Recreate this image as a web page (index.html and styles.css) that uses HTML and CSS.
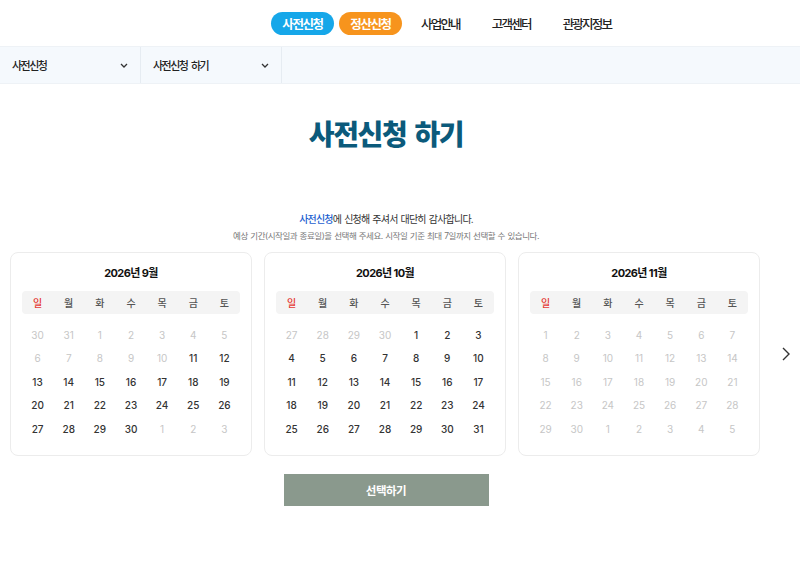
FILE: index.html
```html
<!DOCTYPE html>
<html lang="ko">
<head>
<meta charset="utf-8">
<title>사전신청 하기</title>
<link rel="stylesheet" href="styles.css">
</head>
<body>
<header class="top">
  <nav class="gnb">
    <a class="pill pill-blue">사전신청</a>
    <a class="pill pill-orange">정산신청</a>
    <a class="menu">사업안내</a>
    <a class="menu">고객센터</a>
    <a class="menu">관광지정보</a>
  </nav>
</header>
<div class="subnav">
  <div class="sub-item"><span>사전신청</span><svg class="chev" width="8" height="5" viewBox="0 0 8 5"><path d="M1 1 L4 4 L7 1" fill="none" stroke="#333" stroke-width="1.3"/></svg></div>
  <div class="sub-item"><span>사전신청 하기</span><svg class="chev" width="8" height="5" viewBox="0 0 8 5"><path d="M1 1 L4 4 L7 1" fill="none" stroke="#333" stroke-width="1.3"/></svg></div>
</div>
<main class="content">
  <h1 class="title">사전신청 하기</h1>
  <p class="lead"><span class="hl">사전신청</span>에 신청해 주셔서 대단히 감사합니다.</p>
  <p class="note">예상 기간(시작일과 종료일)을 선택해 주세요. 시작일 기준 최대 7일까지 선택할 수 있습니다.</p>
  <div class="carousel">
    <div class="cards" id="cards"></div>
    <div class="next"><svg width="10" height="16" viewBox="0 0 10 16"><path d="M2 2 L8 8 L2 14" fill="none" stroke="#333" stroke-width="1.4"/></svg></div>
  </div>
  <div class="actions"><button class="btn">선택하기</button></div>
</main>
<script src="app.js"></script>
</body>
</html>
```
FILE: app.js
```js
const months = [
  { title: "2026년 9월", start: 30, days: 30, leadCount: 2, active: d => d >= 11 },
  { title: "2026년 10월", start: 27, days: 31, leadCount: 4, active: d => true },
  { title: "2026년 11월", start: 0, days: 30, leadCount: 0, active: d => false }
];
const wk = ["일","월","화","수","목","금","토"];
const wrap = document.getElementById("cards");
months.forEach(m => {
  const card = document.createElement("div");
  card.className = "card";
  let html = '<div class="cal-title">' + m.title + '</div><div class="week">';
  wk.forEach((w, i) => { html += '<span class="' + (i === 0 ? 'sun' : '') + '">' + w + '</span>'; });
  html += '</div><div class="days">';
  const cells = [];
  for (let i = 0; i < m.leadCount; i++) cells.push({ n: m.start + i, muted: true });
  for (let d = 1; d <= m.days; d++) cells.push({ n: d, muted: !m.active(d) });
  let t = 1;
  while (cells.length < 35) cells.push({ n: t++, muted: true });
  cells.forEach(c => { html += '<span class="' + (c.muted ? 'muted' : '') + '">' + c.n + '</span>'; });
  html += '</div>';
  card.innerHTML = html;
  wrap.appendChild(card);
});
```
FILE: styles.css
```css
* { box-sizing: border-box; }
body {
  margin: 0;
  font-family: Inter, "Noto Sans CJK KR", sans-serif;
  color: #222;
  background: #fff;
}
.top { height: 46px; }
.gnb {
  display: flex;
  align-items: center;
  height: 46px;
  padding-left: 271px;
}
.pill {
  display: inline-flex;
  align-items: center;
  justify-content: center;
  height: 23px;
  width: 63px;
  border-radius: 12px;
  color: #fff;
  font-size: 12.5px;
  font-weight: 700;
  letter-spacing: -1.4px;
}
.pill-blue { background: #16a7e9; margin-right: 5px; }
.pill-orange { background: #f7941d; }
.menu {
  font-size: 12.5px;
  font-weight: 500;
  color: #222;
  padding: 0 15px 0 17px;
  letter-spacing: -1.8px;
}
.pill + .pill + .menu { padding-left: 19px; }
.subnav {
  display: flex;
  height: 38px;
  background: #f5f9fd;
  border-top: 1px solid #eef2f6;
  border-bottom: 1px solid #eef2f6;
}
.sub-item {
  width: 141px;
  display: flex;
  align-items: center;
  justify-content: space-between;
  padding: 0 12px 0 12px;
  border-right: 1px solid #e6ecf2;
  font-size: 11px;
  font-weight: 500;
  letter-spacing: -1.5px;
  word-spacing: 2px;
  color: #222;
}
.content {
  width: 752px;
  margin-left: 10px;
  text-align: center;
}
.title {
  margin: 31px 0 0;
  font-size: 28px;
  line-height: 40px;
  font-weight: 900;
  color: #0b5a7b;
  letter-spacing: -1.4px;
  word-spacing: 4px;
}
.lead {
  margin: 56px 0 0;
  font-size: 10px;
  line-height: 16px;
  color: #333;
  letter-spacing: -0.8px;
  word-spacing: 1px;
}
.hl { color: #1d5fd0; font-weight: 500; }
.note {
  margin: 2px 0 0;
  font-size: 8.5px;
  line-height: 14px;
  color: #777;
  letter-spacing: -0.45px;
  word-spacing: 0.5px;
}
.carousel {
  display: flex;
  align-items: center;
  width: 800px;
  margin-top: 9px;
}
.cards {
  display: flex;
  gap: 12px;
  width: 752px;
}
.card {
  width: 242px;
  border: 1px solid #ececec;
  border-radius: 8px;
  padding: 12px 11px 14px;
}
.cal-title {
  font-size: 11px;
  font-weight: 700;
  line-height: 16px;
  color: #111;
  letter-spacing: -0.6px;
}
.week {
  display: grid;
  grid-template-columns: repeat(7, 1fr);
  height: 23px;
  align-items: center;
  margin-top: 10px;
  background: #f4f4f4;
  border-radius: 4px;
  font-size: 10px;
  font-weight: 500;
  color: #555;
}
.week .sun { color: #e53935; }
.days {
  display: grid;
  grid-template-columns: repeat(7, 1fr);
  grid-auto-rows: 23.5px;
  align-items: center;
  margin-top: 9px;
  font-size: 10px;
  font-weight: 500;
  color: #333;
}
.days .muted { color: #c6c6c6; font-weight: 400; }
.next {
  width: 48px;
  display: flex;
  justify-content: center;
  align-items: center;
}
.actions { margin-top: 18px; display: flex; justify-content: center; }
.btn {
  width: 205px;
  height: 32px;
  border: none;
  background: #8a998d;
  color: #fff;
  font-family: inherit;
  font-size: 11.5px;
  font-weight: 700;
  letter-spacing: -0.5px;
}
```
